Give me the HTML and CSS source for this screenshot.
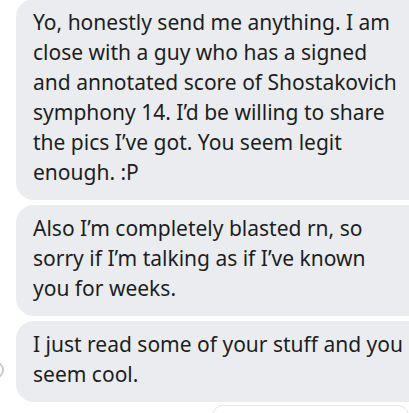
FILE: index.html
```html
<!DOCTYPE html>
<html>
<head>
<meta charset="utf-8">
<link rel="stylesheet" href="styles.css">
</head>
<body>
<div class="thread">
  <div class="bubble first">Yo, honestly send me anything. I am close with a guy who has a signed and annotated score of Shostakovich symphony 14. I’d be willing to share the pics I’ve got. You seem legit enough. :P</div>
  <div class="bubble">Also I’m completely blasted rn, so sorry if I’m talking as if I’ve known you for weeks.</div>
  <div class="row">
    <span class="seen"></span>
    <div class="bubble">I just read some of your stuff and you seem cool.</div>
  </div>
  <div class="composer"></div>
</div>
</body>
</html>
```

FILE: styles.css
```css
html, body {
  margin: 0;
  padding: 0;
  background: #ffffff;
  width: 409px;
  height: 413px;
  overflow: hidden;
}
.thread {
  display: flex;
  flex-direction: column;
  gap: 5px;
  padding-left: 16px;
  margin-top: -1px;
  font-family: "Noto Sans", sans-serif;
  font-size: 21px;
  line-height: 30px;
  color: #1c1e21;
}
.bubble {
  width: 371px;
  padding: 8px 20px 13px 17px;
  background: #ebecf0;
  border-radius: 18px 4px 4px 18px;
}
.row {
  position: relative;
}
.seen {
  position: absolute;
  left: -30px;
  top: 40px;
  width: 14px;
  height: 14px;
  border: 2px solid #c8cacd;
  border-radius: 50%;
}
.composer {
  margin-left: 196px;
  height: 20px;
  border: 1px solid #e4e6eb;
  border-radius: 18px;
  margin-top: -2px;
}
```
